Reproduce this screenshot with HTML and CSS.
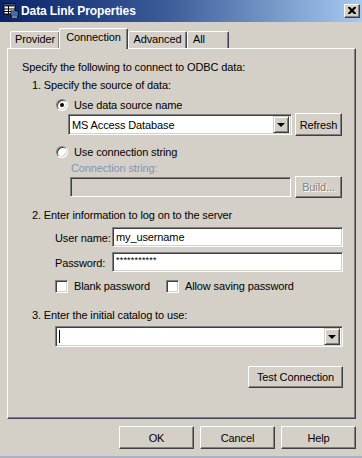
FILE: index.html
```html
<!DOCTYPE html>
<html>
<head>
<meta charset="utf-8">
<title>Data Link Properties</title>
<link rel="stylesheet" href="styles.css">
</head>
<body>
<div class="window">
  <div class="titlebar">
    <svg class="app-icon" width="16" height="16" viewBox="0 0 16 16">
      <rect x="1" y="1" width="11" height="10" fill="#fff" stroke="#000" stroke-width="1"/>
      <rect x="1.5" y="1.5" width="10" height="2" fill="#0a246a"/>
      <line x1="1" y1="6" x2="12" y2="6" stroke="#000"/>
      <line x1="1" y1="8.5" x2="12" y2="8.5" stroke="#000"/>
      <line x1="5.5" y1="3" x2="5.5" y2="11" stroke="#000"/>
      <rect x="8" y="8" width="7" height="5" fill="#c0c0c0" stroke="#000"/>
      <rect x="9" y="9" width="5" height="3" fill="#3a6ea5"/>
      <rect x="9" y="13" width="5" height="2" fill="#808080"/>
    </svg>
    <span class="title">Data Link Properties</span>
    <span class="close-btn">
      <svg width="8" height="7" viewBox="0 0 8 7"><path d="M0 0h2l2 2 2-2h2v1l-2.5 2.5L8 6v1H6L4 5 2 7H0V6l2.5-2.5L0 1z" fill="#000"/></svg>
    </span>
  </div>

  <div class="tabs">
    <div class="tab tab-provider">Provider</div>
    <div class="tab tab-connection selected">Connection</div>
    <div class="tab tab-advanced">Advanced</div>
    <div class="tab tab-all">All</div>
  </div>

  <div class="panel">
    <div class="line r1">Specify the following to connect to ODBC data:</div>
    <div class="line step r2">1. Specify the source of data:</div>

    <div class="choice r3">
      <span class="radio checked"></span>
      <span>Use data source name</span>
    </div>
    <div class="field-row dsn-row r4">
      <div class="combo dsn-combo">
        <span class="combo-value">MS Access Database</span>
        <span class="drop-btn"><span class="tri"></span></span>
      </div>
      <div class="btn side-btn">Refresh</div>
    </div>

    <div class="choice r5">
      <span class="radio"></span>
      <span>Use connection string</span>
    </div>
    <div class="line disabled-label r6">Connection string:</div>
    <div class="field-row conn-row r7">
      <div class="input disabled conn-input"></div>
      <div class="btn side-btn disabled-btn">Build...</div>
    </div>

    <div class="line step r8">2. Enter information to log on to the server</div>
    <div class="field-row login-row r9">
      <span class="field-label">User name:</span>
      <div class="input login-input">my_username</div>
    </div>
    <div class="field-row login-row r10">
      <span class="field-label">Password:</span>
      <div class="input login-input pw">***********</div>
    </div>
    <div class="checks r11">
      <div class="check-item blank"><span class="checkbox"></span><span>Blank password</span></div>
      <div class="check-item"><span class="checkbox"></span><span>Allow saving password</span></div>
    </div>

    <div class="line step r12">3. Enter the initial catalog to use:</div>
    <div class="combo catalog r13">
      <span class="caret"></span>
      <span class="drop-btn"><span class="tri"></span></span>
    </div>
    <div class="test-row r14">
      <div class="btn test-btn">Test Connection</div>
    </div>
  </div>

  <div class="footer">
    <div class="btn foot-btn">OK</div>
    <div class="btn foot-btn">Cancel</div>
    <div class="btn foot-btn">Help</div>
  </div>
</div>
</body>
</html>
```

FILE: styles.css
```css
* { box-sizing: border-box; }

html, body {
  margin: 0;
  padding: 0;
  background: #d4d0c8;
}

body {
  font-family: "Liberation Sans", Arial, sans-serif;
  font-size: 11px;
  letter-spacing: -0.12px;
  color: #000;
}

.window {
  width: 362px;
  height: 458px;
  background: #d4d0c8;
  border-bottom: 2px solid #a9b3c6;
}

/* title bar */
.titlebar {
  height: 22px;
  display: flex;
  align-items: center;
  padding: 0 2px 0 3px;
  background: linear-gradient(to right, #0a246a 0%, #3a5a98 45%, #a6caf0 100%);
}

.app-icon { flex: none; }

.title {
  margin-left: 2px;
  color: #fff;
  font-weight: bold;
  font-size: 12px;
  letter-spacing: -0.1px;
}

.close-btn {
  margin-left: auto;
  width: 16px;
  height: 14px;
  margin-top: -1px;
  display: flex;
  align-items: center;
  justify-content: center;
  background: #d4d0c8;
  border: 1px solid;
  border-color: #fff #404040 #404040 #fff;
  box-shadow: inset -1px -1px #808080;
}

/* tabs */
.tabs {
  display: flex;
  align-items: flex-end;
  height: 26px;
  padding-left: 10px;
}

.tab {
  height: 17px;
  line-height: 15px;
  text-align: center;
  background: #d4d0c8;
  border: 1px solid;
  border-bottom: none;
  border-color: #fff #404058 transparent #fff;
  box-shadow: inset -1px 0 #808080;
  border-radius: 2px 2px 0 0;
}

.tab-provider { width: 50px; }
.tab-advanced { width: 59px; }
.tab-all { width: 42px; text-align: left; padding-left: 5px; }

.tab.selected {
  position: relative;
  z-index: 1;
  width: 69px;
  height: 21px;
  margin-left: -1px;
  margin-bottom: -1px;
  line-height: 16px;
}

/* panel */
.panel {
  margin: 0 6px 0 7px;
  height: 371px;
  padding: 12px 12px 0 14px;
  border: 1px solid;
  border-color: #fff #404058 #404058 #fff;
  box-shadow: inset -1px -1px #808080;
}

.line {
  height: 13px;
  line-height: 13px;
  white-space: nowrap;
}

.step { padding-left: 10px; }

.disabled-label {
  padding-left: 49px;
  color: #8493b6;
}

.choice {
  display: flex;
  align-items: center;
  height: 13px;
  padding-left: 34px;
  gap: 6px;
}

.radio {
  flex: none;
  width: 12px;
  height: 12px;
  border-radius: 50%;
  background: #fff;
  border: 1px solid;
  border-color: #808080 #fff #fff #808080;
  box-shadow: inset 1px 1px #404040, inset -1px -1px #d4d0c8;
  position: relative;
}

.radio.checked::after {
  content: "";
  position: absolute;
  left: 3px;
  top: 3px;
  width: 4px;
  height: 4px;
  border-radius: 50%;
  background: #000;
}

.field-row {
  display: flex;
  align-items: center;
}

.dsn-row {
  height: 23px;
  padding-left: 46px;
  gap: 3px;
}

.conn-row {
  height: 22px;
  padding-left: 48px;
  gap: 4px;
}

.input, .combo {
  height: 20px;
  background: #fff;
  border: 1px solid;
  border-color: #808080 #fff #fff #808080;
  box-shadow: inset 1px 1px #404040, inset -1px -1px #d4d0c8;
  line-height: 18px;
  padding: 0 3px;
  white-space: nowrap;
}

.combo {
  display: flex;
  align-items: center;
  height: 21px;
  padding: 2px 2px 2px 3px;
}

.dsn-combo { width: 224px; }

.combo-value { flex: 1; line-height: 16px; }

.drop-btn {
  margin-left: auto;
  width: 16px;
  height: 17px;
  flex: none;
  display: flex;
  align-items: center;
  justify-content: center;
  background: #d4d0c8;
  border: 1px solid;
  border-color: #d4d0c8 #404040 #404040 #d4d0c8;
  box-shadow: inset 1px 1px #fff, inset -1px -1px #808080;
}

.tri {
  width: 0;
  height: 0;
  border-left: 4px solid transparent;
  border-right: 4px solid transparent;
  border-top: 4px solid #000;
  margin-top: 1px;
}

.btn {
  display: flex;
  align-items: center;
  justify-content: center;
  background: #d4d0c8;
  border: 1px solid;
  border-color: #fff #404040 #404040 #fff;
  box-shadow: inset -1px -1px #808080;
  white-space: nowrap;
}

.side-btn {
  width: 47px;
  height: 23px;
}

.conn-row .side-btn { height: 22px; }

.input.disabled {
  background: #d4d0c8;
}

.conn-input { width: 221px; height: 20px; }

.disabled-btn {
  color: #808080;
  text-shadow: 1px 1px #fff;
}

.login-row {
  height: 20px;
  padding-left: 33px;
}

.field-label {
  width: 57px;
  flex: none;
  padding-top: 1px;
}

.login-input {
  flex: 1;
}

.pw {
  font-size: 9px;
  line-height: 10px;
  letter-spacing: 0.2px;
  padding-top: 2px;
}

.checks {
  display: flex;
  align-items: center;
  height: 14px;
  padding-left: 33px;
}

.check-item {
  display: flex;
  align-items: center;
  gap: 6px;
}

.check-item.blank { width: 111px; }

.checkbox {
  width: 13px;
  height: 13px;
  background: #fff;
  border: 1px solid;
  border-color: #808080 #fff #fff #808080;
  box-shadow: inset 1px 1px #404040, inset -1px -1px #d4d0c8;
}

.catalog {
  margin-left: 33px;
}

.caret {
  width: 1px;
  height: 13px;
  background: #000;
}

.test-row {
  display: flex;
  justify-content: flex-end;
}

.test-btn {
  width: 95px;
  height: 22px;
}

/* vertical rhythm */
.r2 { margin-top: 5px; }
.r3 { margin-top: 6px; }
.r4 { margin-top: 2px; }
.r5 { margin-top: 9px; }
.r6 { margin-top: 4px; }
.r7 { margin-top: 1px; }
.r8 { margin-top: 11px; }
.r9 { margin-top: 5px; }
.r10 { margin-top: 5px; }
.r11 { margin-top: 7px; }
.r12 { margin-top: 16px; }
.r13 { margin-top: 4px; }
.r14 { margin-top: 19px; }

/* footer */
.footer {
  display: flex;
  justify-content: flex-end;
  gap: 6px;
  padding: 7px 6px 0 0;
}

.foot-btn {
  width: 75px;
  height: 23px;
}
```
